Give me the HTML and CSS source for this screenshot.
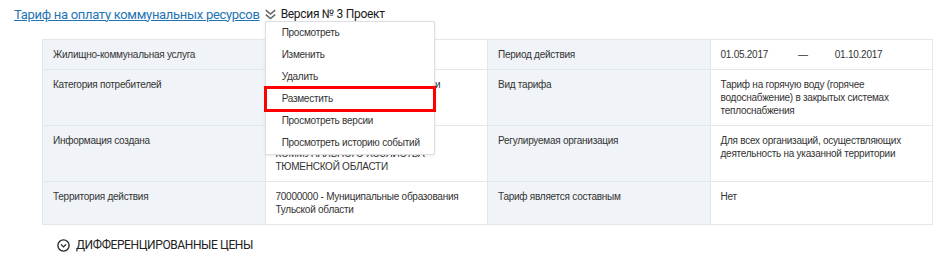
FILE: index.html
```html
<!DOCTYPE html>
<html lang="ru">
<head>
    <meta charset="UTF-8">
    <meta name="viewport" content="width=device-width, initial-scale=1.0">
    <title>Тариф на оплату коммунальных ресурсов</title>
    <link rel="stylesheet" href="styles.css">
</head>
<body>
    <div class="page">
        <div class="title-row">
            <a class="title-link" href="#">Тариф на оплату коммунальных ресурсов</a>
            <div class="version">
                <span class="version-toggle">
                    <svg class="chevrons" width="11" height="11" viewBox="0 0 11 11">
                        <path d="M0.8 1.2 L5.5 5 L10.2 1.2" />
                        <path d="M0.8 5.7 L5.5 9.5 L10.2 5.7" />
                    </svg>
                    Версия № 3 Проект
                </span>
                <ul class="menu">
                    <li>Просмотреть</li>
                    <li>Изменить</li>
                    <li>Удалить</li>
                    <li class="highlight">Разместить</li>
                    <li>Просмотреть версии</li>
                    <li>Просмотреть историю событий</li>
                </ul>
            </div>
        </div>

        <div class="info-table">
            <div class="cell label">Жилищно-коммунальная услуга</div>
            <div class="cell value">Горячее водоснабжение</div>
            <div class="cell label">Период действия</div>
            <div class="cell value">
                <span>01.05.2017</span><span class="dash">—</span><span>01.10.2017</span>
            </div>

            <div class="cell label">Категория потребителей</div>
            <div class="cell value">Население, приравненные категории</div>
            <div class="cell label">Вид тарифа</div>
            <div class="cell value">Тариф на горячую воду (горячее водоснабжение) в закрытых системах теплоснабжения</div>

            <div class="cell label">Информация создана</div>
            <div class="cell value">ДЕПАРТАМЕНТ ЖИЛИЩНО-КОММУНАЛЬНОГО ХОЗЯЙСТВА ТЮМЕНСКОЙ ОБЛАСТИ</div>
            <div class="cell label">Регулируемая организация</div>
            <div class="cell value">Для всех организаций, осуществляющих деятельность на указанной территории</div>

            <div class="cell label">Территория действия</div>
            <div class="cell value">70000000 - Муниципальные образования Тульской области</div>
            <div class="cell label">Тариф является составным</div>
            <div class="cell value">Нет</div>
        </div>

        <div class="section-toggle">
            <svg class="circle-icon" width="13" height="13" viewBox="0 0 13 13">
                <circle cx="6.5" cy="6.5" r="5.6" />
                <path d="M4 5.4 L6.5 7.9 L9 5.4" />
            </svg>
            <span>ДИФФЕРЕНЦИРОВАННЫЕ ЦЕНЫ</span>
        </div>
    </div>
</body>
</html>
```

FILE: styles.css
```css
/* Global */
body {
    margin: 0;
    padding: 0;
    background: #fff;
    color: #333;
    font-family: "Liberation Sans", Arial, sans-serif;
    font-size: 10px;
    letter-spacing: -0.25px;
}

.page {
    padding: 5px 14px 0 14px;
}

/* Title row */
.title-row {
    display: flex;
    align-items: center;
    height: 18px;
    font-family: Roboto, "Liberation Sans", sans-serif;
    font-size: 13px;
    letter-spacing: -0.3px;
}

.title-link {
    color: #1f74b4;
    text-decoration: underline;
}

.version {
    position: relative;
    margin-left: 5px;
}

.version-toggle {
    display: flex;
    align-items: center;
    gap: 5px;
    height: 16px;
    font-size: 12px;
    color: #1a1a1a;
}

.chevrons {
    fill: none;
    stroke: #666;
    stroke-width: 1.6;
}

/* Dropdown */
.menu {
    position: absolute;
    top: 15px;
    left: 0;
    z-index: 10;
    width: 168px;
    margin: 0;
    padding: 0;
    list-style: none;
    background: #fff;
    border: 1px solid #dcdfe4;
    box-shadow: 0 1px 3px rgba(0, 0, 0, 0.08);
    font-family: "Liberation Sans", Arial, sans-serif;
    font-size: 10px;
    letter-spacing: -0.25px;
    color: #333;
}

.menu li {
    height: 22px;
    line-height: 22px;
    padding-left: 16px;
    white-space: nowrap;
}

.menu li.highlight {
    outline: 3px solid #ff0000;
    outline-offset: -1px;
    position: relative;
}

/* Info table */
.info-table {
    display: grid;
    grid-template-columns: repeat(4, 1fr);
    gap: 1px;
    width: 891px;
    box-sizing: border-box;
    margin: 16px 0 0 28px;
    background: #e2e7ec;
    border: 1px solid #e2e7ec;
}

.cell {
    padding: 8px 10px;
    line-height: 13px;
}

.label {
    background: #f0f3f7;
}

.value {
    background: #fff;
}

.dash {
    margin: 0 27px 0 30px;
}

/* Section toggle */
.section-toggle {
    display: flex;
    align-items: center;
    gap: 6px;
    margin: 13px 0 0 43px;
    font-family: Roboto, "Liberation Sans", sans-serif;
    font-size: 12px;
    letter-spacing: -0.4px;
    color: #222;
}

.circle-icon {
    fill: none;
    stroke: #222;
    stroke-width: 1.3;
}
```
